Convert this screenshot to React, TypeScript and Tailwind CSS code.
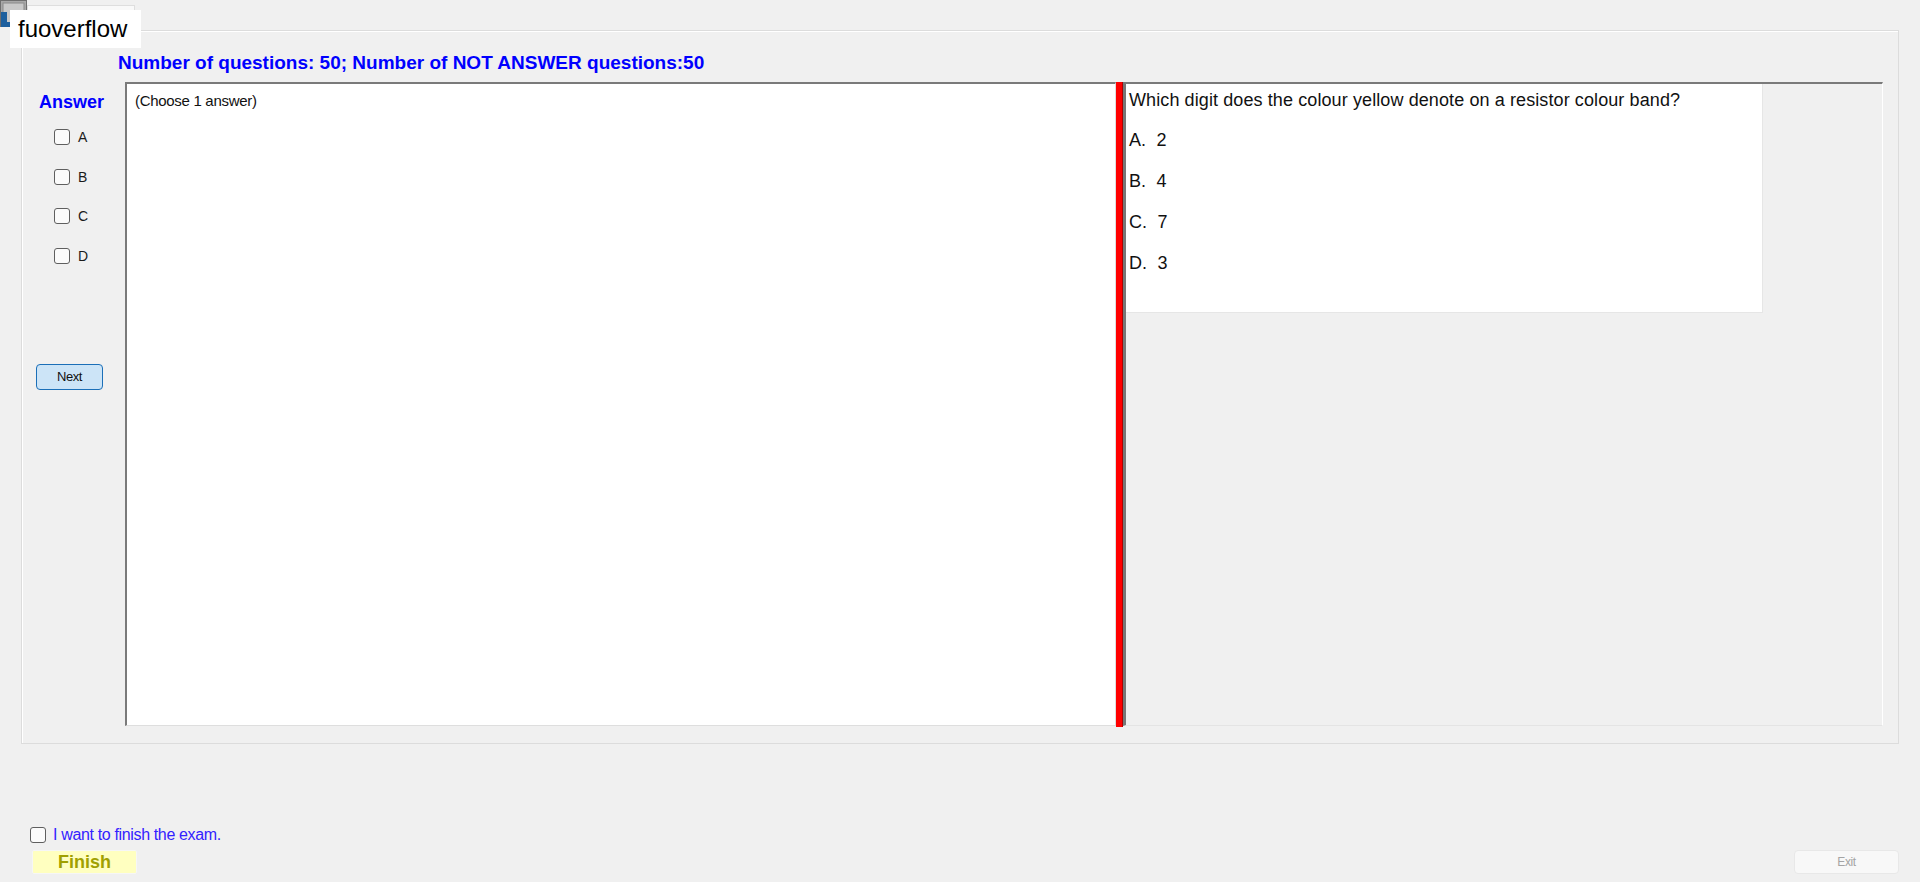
import React from 'react';

const font = "font-['Liberation_Sans',Arial,sans-serif]";

const Box: React.FC<{ className?: string }> = ({ className = '' }) => (
  <span className={`inline-block w-[16px] h-[16px] rounded-[3px] border border-[#5f5f5f] bg-[#fbfbfb] ${className}`} />
);

const AnswerOption: React.FC<{ letter: string }> = ({ letter }) => (
  <div className="flex items-center h-[16px] gap-[8px]">
    <Box />
    <span className="text-[14px] leading-none text-[#1a1a1a]">{letter}</span>
  </div>
);

const options = ['A.  2', 'B.  4', 'C.  7', 'D.  3'];

export default function App() {
  return (
    <div className={`relative w-full h-[882px] bg-[#f0f0f0] overflow-hidden ${font}`}>
      {/* app icon + watermark label, drawn over the frame */}
      <svg className="absolute left-0 top-0" width="28" height="28" viewBox="0 0 28 28">
        <rect x="0.5" y="0.5" width="26" height="26" fill="#a8a8a8" stroke="#6e6e6e" />
        <rect x="3" y="3" width="21" height="21" fill="#c9c9c9" stroke="#8a8a8a" />
        <path d="M1 12 H7 V22 H20 V27 H1 Z" fill="#1d5f9e" />
      </svg>
      <div className="absolute left-[27px] top-[5px] w-[108px] h-[30px] bg-[#f9f9f9] border border-[#dedede]" />
      <div className="absolute left-[10px] top-[10px] w-[131px] h-[38px] bg-white flex items-center pl-[8px] text-[24px] text-black">
        fuoverflow
      </div>

      {/* main frame */}
      <div className="ml-[21px] mt-[30px] w-[1878px] h-[714px] border border-[#dcdcdc] shadow-[inset_1px_1px_0_#ffffff] flex flex-col">
        <div className="h-[51px] pl-[96px] pt-[21px]">
          <span className="text-[19px] leading-[22px] font-bold text-[#0000ff]">
            Number of questions: 50; Number of NOT ANSWER questions:50
          </span>
        </div>

        <div className="flex">
          {/* answer column */}
          <div className="w-[103px] flex flex-col">
            <div className="pl-[17px] pt-[9px] text-[18px] leading-[22px] font-bold text-[#0000ff]">Answer</div>
            <div className="pl-[32px] pt-[16px] flex flex-col gap-[23.5px]">
              {['A', 'B', 'C', 'D'].map((l) => (
                <AnswerOption key={l} letter={l} />
              ))}
            </div>
            <button className="ml-[14px] mt-[100px] w-[67px] h-[26px] rounded-[4px] border border-[#1b6fb8] bg-[#cce4f7] text-[13px] tracking-[-0.4px] text-[#111]">
              Next
            </button>
          </div>

          {/* answer sheet */}
          <div className="w-[991px] h-[644px] bg-white border-l-2 border-t-2 border-r border-b border-l-[#7a7a7a] border-t-[#7a7a7a] border-r-[#dedede] border-b-[#dedede] pl-[8px] pt-[5px]">
            <span className="text-[15px] leading-[18px] tracking-[-0.3px] text-[#111]">(Choose 1 answer)</span>
          </div>

          {/* splitter */}
          <div className="w-[7px] h-[645px] bg-[#ff0000] border-r border-[#b00000]" />

          {/* question pane */}
          <div className="w-[760px] h-[644px] bg-[#f0f0f0] border-l-[3px] border-t-2 border-r border-b border-l-[#777777] border-t-[#7a7a7a] border-r-[#ffffff] border-b-[#e4e4e4]">
            <div className="w-[637px] h-[229px] bg-white border-r border-b border-[#e6e6e6] pl-[3px] pt-[5px] text-[18px] leading-[22px] tracking-[0.1px] text-[#111]">
              <div>Which digit does the colour yellow denote on a resistor colour band?</div>
              {options.map((o, i) => (
                <div key={o} className={`whitespace-pre ${i === 0 ? 'mt-[18px]' : 'mt-[19px]'}`}>
                  {o}
                </div>
              ))}
            </div>
          </div>
        </div>
      </div>

      {/* bottom controls */}
      <div className="mt-[82px] pl-[30px] flex items-center gap-[7px]">
        <Box />
        <span className="text-[16px] leading-[18px] tracking-[-0.35px] text-[#3322ff]">I want to finish the exam.</span>
      </div>
      <div className="mt-[6px] pl-[32px] pr-[21px] flex justify-between">
        <button className="w-[105px] h-[24px] bg-[#ffffc0] border border-[#f6f6f6] rounded-[2px] text-[18px] leading-none font-bold text-[#a0a000]">
          Finish
        </button>
        <button className="w-[105px] h-[24px] bg-[#f8f8f8] border border-[#e8e8e8] rounded-[4px] text-[12px] tracking-[-0.4px] text-[#a4a4a4]">
          Exit
        </button>
      </div>
    </div>
  );
}
